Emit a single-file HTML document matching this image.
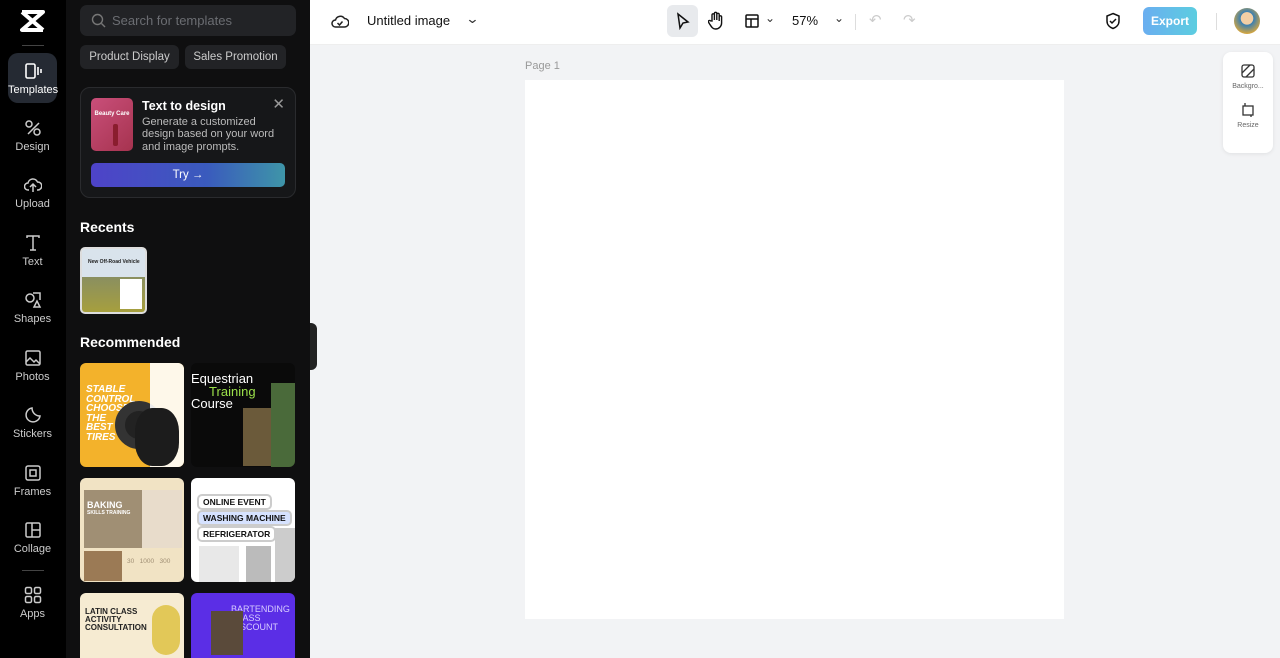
<!DOCTYPE html>
<html style="overflow:hidden;height:658px"><head><meta charset="utf-8"><style>
*{box-sizing:border-box;margin:0;padding:0}
body{width:1280px;height:658px;overflow:hidden;font-family:"Liberation Sans",sans-serif;background:#f2f3f5;position:relative}
.rail{position:absolute;left:0;top:0;width:66px;height:658px;background:#000}
.ri{position:absolute;left:8px;width:49px;height:50px;color:#ccc;font-size:11px;text-align:center}
.ri svg{display:block;margin:0 auto 4px}
.panel{position:absolute;left:66px;top:0;width:244px;height:658px;background:#0f0f10;color:#fff;overflow:hidden}
.top{position:absolute;left:310px;top:0;width:970px;height:45px;background:#fff;border-bottom:1px solid #eee}
.th{position:absolute;width:104px;height:104px;border-radius:6px;overflow:hidden}
</style></head><body>
<div class="rail">
 <svg style="position:absolute;left:20px;top:10px" width="25" height="22" viewBox="0 0 25 22"><path d="M2 2h21L2 20h21M2 2l21 18" stroke="#fff" stroke-width="4" fill="none" stroke-linejoin="round"/></svg>
 <div style="position:absolute;left:22px;top:45px;width:22px;height:1px;background:#444"></div>
 <div class="ri" style="top:53px;background:#252a33;border-radius:10px;color:#fff;padding-top:9px"><svg width="18" height="18" viewBox="0 0 18 18" fill="none" stroke="#fff" stroke-width="1.6"><rect x="2" y="2" width="9" height="14" rx="1.5"/><path d="M14 5v8M17 7v4"/></svg>Templates</div>
 <div class="ri" style="top:119px"><svg width="18" height="18" viewBox="0 0 18 18" fill="none" stroke="#ccc" stroke-width="1.5"><circle cx="5" cy="5" r="3"/><circle cx="13" cy="13" r="3"/><path d="M4 15L15 4"/></svg>Design</div>
 <div class="ri" style="top:176px"><svg width="18" height="18" viewBox="0 0 18 18" fill="none" stroke="#ccc" stroke-width="1.5"><path d="M5 14H4a3.5 3.5 0 010-7 5 5 0 019.5-1A3.5 3.5 0 0114 14h-1M9 16V9M6 11l3-3 3 3"/></svg>Upload</div>
 <div class="ri" style="top:234px"><svg width="18" height="18" viewBox="0 0 18 18" fill="none" stroke="#ccc" stroke-width="1.5"><path d="M3 4V2h12v2M9 2v14M6 16h6"/></svg>Text</div>
 <div class="ri" style="top:291px"><svg width="18" height="18" viewBox="0 0 18 18" fill="none" stroke="#ccc" stroke-width="1.5"><circle cx="6" cy="7" r="4"/><path d="M9 2h7v7M10 16l3-6 3 6z"/></svg>Shapes</div>
 <div class="ri" style="top:349px"><svg width="18" height="18" viewBox="0 0 18 18" fill="none" stroke="#ccc" stroke-width="1.5"><rect x="2" y="2" width="14" height="14" rx="1.5"/><path d="M2 13l4-4 4 4 2-2 4 4"/></svg>Photos</div>
 <div class="ri" style="top:406px"><svg width="18" height="18" viewBox="0 0 18 18" fill="none" stroke="#ccc" stroke-width="1.5"><path d="M16 10A7 7 0 118 2c0 4 3 8 8 8z"/></svg>Stickers</div>
 <div class="ri" style="top:464px"><svg width="18" height="18" viewBox="0 0 18 18" fill="none" stroke="#ccc" stroke-width="1.5"><rect x="2" y="2" width="14" height="14" rx="2"/><rect x="6" y="6" width="6" height="6"/></svg>Frames</div>
 <div class="ri" style="top:521px"><svg width="18" height="18" viewBox="0 0 18 18" fill="none" stroke="#ccc" stroke-width="1.5"><rect x="2" y="2" width="14" height="14" rx="1.5"/><path d="M8 2v14M8 9h8"/></svg>Collage</div>
 <div style="position:absolute;left:22px;top:570px;width:22px;height:1px;background:#444"></div>
 <div class="ri" style="top:586px;font-size:11px"><svg width="18" height="18" viewBox="0 0 18 18" fill="none" stroke="#ccc" stroke-width="1.5"><rect x="1.5" y="1.5" width="6" height="6" rx="1.5"/><rect x="10.5" y="1.5" width="6" height="6" rx="1.5"/><rect x="1.5" y="10.5" width="6" height="6" rx="1.5"/><rect x="10.5" y="10.5" width="6" height="6" rx="1.5"/></svg>Apps</div>
</div>
<div class="panel">
 <div style="position:absolute;left:14px;top:5px;width:216px;height:31px;background:#222326;border-radius:7px;color:#6b6d72;font-size:13px;line-height:31px;padding-left:32px">
  <svg style="position:absolute;left:11px;top:8px" width="15" height="15" viewBox="0 0 15 15" fill="none" stroke="#777" stroke-width="1.4"><circle cx="6.5" cy="6.5" r="5"/><path d="M10.5 10.5L14 14"/></svg>Search for templates</div>
 <div style="position:absolute;left:14px;top:45px;width:99px;height:24px;background:#222326;border-radius:6px;color:#ccc;font-size:11.5px;line-height:24px;text-align:center">Product Display</div>
 <div style="position:absolute;left:119px;top:45px;width:101px;height:24px;background:#222326;border-radius:6px;color:#ccc;font-size:11.5px;line-height:24px;text-align:center">Sales Promotion</div>
 <div style="position:absolute;left:14px;top:87px;width:216px;height:111px;background:#161719;border:1px solid #2a2b2e;border-radius:10px">
  <div style="position:absolute;left:10px;top:10px;width:42px;height:53px;border-radius:5px;background:linear-gradient(135deg,#c94f7a,#a6334f);overflow:hidden"><div style="color:#fff;font-size:6px;font-weight:bold;margin-top:13px;text-align:center">Beauty Care</div><div style="position:absolute;left:22px;top:26px;width:5px;height:22px;background:#8a1d2e;border-radius:2px"></div></div>
  <div style="position:absolute;left:61px;top:11px;font-weight:bold;font-size:12.5px">Text to design</div>
  <div style="position:absolute;left:61px;top:28px;width:140px;font-size:11px;line-height:12.3px;color:#bbb">Generate a customized design based on your word and image prompts.</div>
  <div style="position:absolute;right:10px;top:7px;color:#999;font-size:15px">✕</div>
  <div style="position:absolute;left:10px;top:75px;width:194px;height:24px;border-radius:5px;background:linear-gradient(90deg,#4e43c8,#3a5bbd 60%,#3e95a8);color:#fff;font-size:11.5px;line-height:24px;text-align:center">Try →</div>
 </div>
 <div style="position:absolute;left:14px;top:219px;font-weight:bold;font-size:14px">Recents</div>
 <div style="position:absolute;left:14px;top:247px;width:67px;height:67px;border-radius:5px;background:#fff;overflow:hidden;border:2px solid #ddd">
  <div style="height:28px;background:#d9e3ec;font-size:5px;color:#222;padding:10px 0 0 6px;font-weight:bold">New Off-Road Vehicle</div>
  <div style="height:37px;background:linear-gradient(#8a8f60,#a8a03c)"></div>
  <div style="position:absolute;left:38px;top:30px;width:22px;height:30px;background:#fff"></div>
 </div>
 <div style="position:absolute;left:14px;top:334px;font-weight:bold;font-size:14px">Recommended</div>
 <div class="th" style="left:14px;top:363px;background:#f3b22b"><div style="position:absolute;left:6px;top:22px;color:#fff;font-weight:900;font-style:italic;font-size:10px;line-height:9.5px">STABLE<br>CONTROL<br>CHOOSE<br>THE<br>BEST<br>TIRES</div><div style="position:absolute;left:35px;top:38px;width:48px;height:48px;border-radius:50%;background:#222;border:10px solid #333"></div><div style="position:absolute;right:0;top:0;width:34px;height:104px;background:#fff;opacity:.9"></div><div style="position:absolute;left:55px;top:45px;width:44px;height:58px;border-radius:40%;background:#1c1c1c"></div></div>
 <div class="th" style="left:125px;top:363px;background:#0a0a0a"><div style="position:absolute;left:0;top:10px;color:#fff;font-size:13px;line-height:12.5px">Equestrian<br><span style="color:#9be04a">&nbsp;&nbsp;&nbsp;&nbsp;&nbsp;Training</span><br>Course</div><div style="position:absolute;left:52px;top:45px;width:28px;height:58px;background:#6b5a3a"></div><div style="position:absolute;left:80px;top:20px;width:24px;height:84px;background:#4a6a3a"></div></div>
 <div class="th" style="left:14px;top:478px;background:#f1e3c4"><div style="position:absolute;left:4px;top:12px;width:58px;height:58px;background:#a08f74;color:#fff;font-weight:bold;font-size:9px;padding:10px 3px">BAKING<div style="font-size:5px">SKILLS TRAINING</div></div><div style="position:absolute;left:62px;top:12px;width:40px;height:58px;background:#e8dccb"></div><div style="position:absolute;left:4px;top:73px;width:38px;height:30px;background:#9b7a55"></div><div style="position:absolute;left:47px;top:80px;color:#a08f74;font-size:6.5px">30 &nbsp; 1000 &nbsp; 300</div></div>
 <div class="th" style="left:125px;top:478px;background:#fff;font-weight:bold;font-size:8.5px;color:#111"><div style="position:absolute;left:6px;top:16px;border:2px solid #ccc;border-radius:5px;padding:1px 4px">ONLINE EVENT</div><div style="position:absolute;left:6px;top:32px;background:#d6e2ff;border:2px solid #ccc;border-radius:5px;padding:1px 4px">WASHING MACHINE</div><div style="position:absolute;left:6px;top:48px;border:2px solid #ccc;border-radius:5px;padding:1px 4px">REFRIGERATOR</div><div style="position:absolute;left:8px;top:68px;width:40px;height:36px;background:#e8e8e8"></div><div style="position:absolute;left:55px;top:68px;width:25px;height:36px;background:#bbb"></div><div style="position:absolute;left:84px;top:50px;width:20px;height:54px;background:#ccc"></div></div>
 <div class="th" style="left:14px;top:593px;height:65px;border-radius:6px 6px 0 0;background:#f6ebd2"><div style="position:absolute;left:5px;top:15px;font-weight:bold;font-size:8px;color:#222;line-height:8px">LATIN CLASS<br>ACTIVITY<br>CONSULTATION</div><div style="position:absolute;left:72px;top:12px;width:28px;height:50px;background:#e2c858;border-radius:14px"></div></div>
 <div class="th" style="left:125px;top:593px;height:65px;border-radius:6px 6px 0 0;background:#5b2ee6"><div style="position:absolute;left:40px;top:12px;color:#d8ccff;font-size:9px;line-height:9px">BARTENDING<br>CLASS<br>DISCOUNT</div><div style="position:absolute;left:20px;top:18px;width:32px;height:44px;background:#5a4a3a"></div></div>
</div>
<div style="position:absolute;left:310px;top:323px;width:7px;height:47px;background:#222;border-radius:0 6px 6px 0"></div>
<div class="top">
 <svg style="position:absolute;left:21px;top:12px" width="18" height="18" viewBox="0 0 18 18" fill="none" stroke="#222" stroke-width="1.5"><path d="M5 15H4.5a3.5 3.5 0 010-7 5 5 0 019 -1.5A3.5 3.5 0 0113.5 15H5zM6.5 11l2 2 3-3.5"/></svg>
 <div style="position:absolute;left:57px;top:13px;font-size:13px;color:#111">Untitled image</div>
 <div style="position:absolute;left:157px;top:11px;font-size:13px;color:#333;transform:scaleX(1.3)">⌄</div>
 <div style="position:absolute;left:357px;top:5px;width:31px;height:32px;background:#e8eaed;border-radius:6px"></div>
 <svg style="position:absolute;left:365px;top:12px" width="16" height="18" viewBox="0 0 16 18" fill="none" stroke="#111" stroke-width="1.5"><path d="M3 2l10 8-5 1-3 5z"/></svg>
 <svg style="position:absolute;left:398px;top:11px" width="16" height="19" viewBox="0 0 16 19" fill="none" stroke="#111" stroke-width="1.4"><path d="M4 10V4a1.2 1.2 0 012.4 0v5V2.5a1.2 1.2 0 012.4 0V9V3.5a1.2 1.2 0 012.4 0V10V6a1.2 1.2 0 012.4 0v6a6 6 0 01-6 6c-3 0-4-2-6-5l-1.2-2a1.2 1.2 0 012-1.2z"/></svg>
 <svg style="position:absolute;left:434px;top:13px" width="16" height="16" viewBox="0 0 16 16" fill="none" stroke="#111" stroke-width="1.5"><rect x="2" y="2" width="12" height="12" rx="1"/><path d="M2 6h12M7 6v8"/></svg>
 <div style="position:absolute;left:455px;top:11px;font-size:12px;color:#333">⌄</div>
 <div style="position:absolute;left:482px;top:13px;font-size:13px;color:#111">57%</div>
 <div style="position:absolute;left:524px;top:11px;font-size:12px;color:#333">⌄</div>
 <div style="position:absolute;left:545px;top:14px;width:1px;height:16px;background:#ddd"></div>
 <div style="position:absolute;left:559px;top:11px;font-size:15px;color:#ccc">↶</div>
 <div style="position:absolute;left:593px;top:11px;font-size:15px;color:#ccc">↷</div>
 <svg style="position:absolute;left:795px;top:12px" width="16" height="18" viewBox="0 0 16 18" fill="none" stroke="#111" stroke-width="1.5"><path d="M8 1.5l6 2.5v5c0 4-3 6.5-6 7.5-3-1-6-3.5-6-7.5V4z M5 9l2 2 4-4"/></svg>
 <div style="position:absolute;left:833px;top:7px;width:54px;height:28px;border-radius:6px;background:linear-gradient(90deg,#6aaef0,#5ccde0);color:#fff;font-size:12px;font-weight:bold;line-height:28px;text-align:center">Export</div>
 <div style="position:absolute;left:906px;top:13px;width:1px;height:17px;background:#ddd"></div>
 <div style="position:absolute;left:924px;top:8px;width:26px;height:26px;border-radius:50%;background:radial-gradient(circle at 50% 40%,#f3cfa5 30%,#3a7fb2 32%,#d4a640 75%)"></div>
</div>
<div style="position:absolute;left:525px;top:60px;font-size:11px;color:#999">Page 1</div>
<div style="position:absolute;left:525px;top:80px;width:539px;height:539px;background:#fff"></div>
<div style="position:absolute;left:1223px;top:52px;width:50px;height:101px;background:#fff;border-radius:8px;box-shadow:0 1px 4px rgba(0,0,0,.08);font-size:7px;color:#666;text-align:center">
 <svg style="margin:12px auto 0;display:block" width="14" height="14" viewBox="0 0 14 14" fill="none" stroke="#333" stroke-width="1.3"><rect x="1" y="1" width="12" height="12" rx="2"/><path d="M1 9L9 1M5 13l8-8"/></svg><div style="margin-top:5px">Backgro...</div>
 <svg style="margin:13px auto 0;display:block" width="14" height="14" viewBox="0 0 14 14" fill="none" stroke="#333" stroke-width="1.3"><rect x="2" y="3" width="10" height="9"/><path d="M4 0v3M10 12v2"/></svg><div style="margin-top:5px">Resize</div>
</div>
</body></html>
